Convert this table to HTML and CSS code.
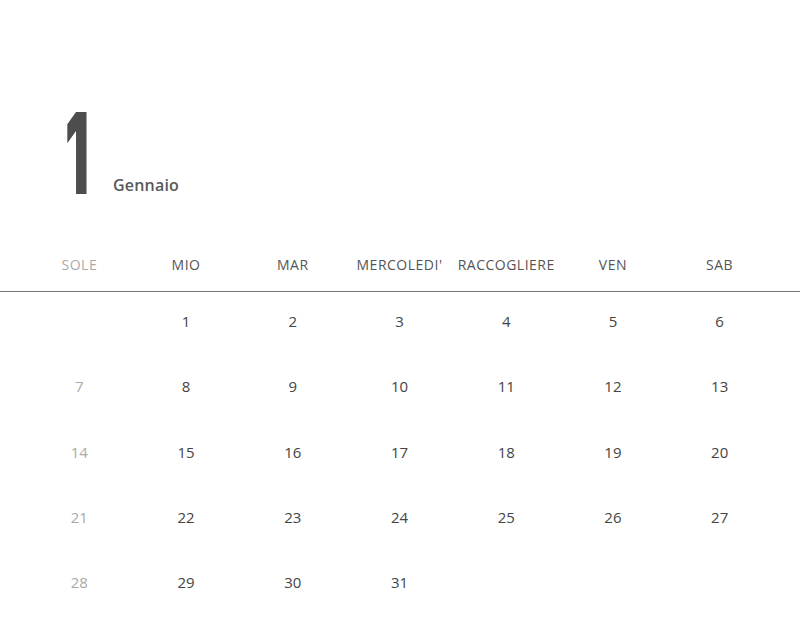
FILE: index.html
```html
<!DOCTYPE html>
<html lang="it">
<head>
<meta charset="utf-8">
<link rel="stylesheet" href="styles.css">
</head>
<body>
<div class="page">
  <div class="title">
    <span class="num">1</span>
    <span class="month">Gennaio</span>
  </div>
  <div class="week">
    <div class="head sun">SOLE</div>
    <div class="head">MIO</div>
    <div class="head">MAR</div>
    <div class="head">MERCOLEDI'</div>
    <div class="head">RACCOGLIERE</div>
    <div class="head">VEN</div>
    <div class="head">SAB</div>
  </div>
  <div class="rule"></div>
  <div class="days">
    <div class="d sun"></div><div class="d">1</div><div class="d">2</div><div class="d">3</div><div class="d">4</div><div class="d">5</div><div class="d">6</div>
    <div class="d sun">7</div><div class="d">8</div><div class="d">9</div><div class="d">10</div><div class="d">11</div><div class="d">12</div><div class="d">13</div>
    <div class="d sun">14</div><div class="d">15</div><div class="d">16</div><div class="d">17</div><div class="d">18</div><div class="d">19</div><div class="d">20</div>
    <div class="d sun">21</div><div class="d">22</div><div class="d">23</div><div class="d">24</div><div class="d">25</div><div class="d">26</div><div class="d">27</div>
    <div class="d sun">28</div><div class="d">29</div><div class="d">30</div><div class="d">31</div><div class="d"></div><div class="d"></div><div class="d"></div>
  </div>
</div>
</body>
</html>
```

FILE: styles.css
```css
html, body {
  margin: 0;
  padding: 0;
  background: #fff;
}
body {
  font-family: "Open Sans", "Liberation Sans", sans-serif;
  color: #444;
  width: 800px;
  height: 644px;
  overflow: hidden;
}
.title {
  display: flex;
  align-items: flex-end;
  padding: 90px 0 0 0;
  height: 120px;
}
.num {
  display: inline-block;
  width: 113px;
  margin-bottom: -3px;
  text-align: left;
  font-family: "Inter", "Open Sans", sans-serif;
  font-size: 113px;
  line-height: 120px;
  font-weight: 900;
  color: #4d4d4d;
  transform-origin: 66px 50%;
  transform: scaleX(0.47);
  text-indent: 64px;
}
.month {
  font-size: 16px;
  line-height: 20px;
  font-weight: 600;
  color: #595959;
  padding-bottom: 15px;
  letter-spacing: 0.2px;
}
.week {
  display: grid;
  grid-template-columns: repeat(7, 1fr);
  padding: 0 27px 0 26px;
  margin-top: 45px;
}
.head {
  text-align: center;
  font-size: 14px;
  line-height: 20px;
  padding-bottom: 16px;
  color: #555;
  letter-spacing: 0.5px;
  white-space: nowrap;
}
.head.sun { color: #aaa; }
.rule {
  height: 1px;
  background: #777;
}
.days {
  display: grid;
  grid-template-columns: repeat(7, 1fr);
  grid-auto-rows: 65.3px;
  padding: 0 27px 0 26px;
}
.d {
  text-align: center;
  font-size: 15px;
  line-height: 20px;
  padding-top: 19px;
  color: #444;
}
.d.sun { color: #aaa; }
```
